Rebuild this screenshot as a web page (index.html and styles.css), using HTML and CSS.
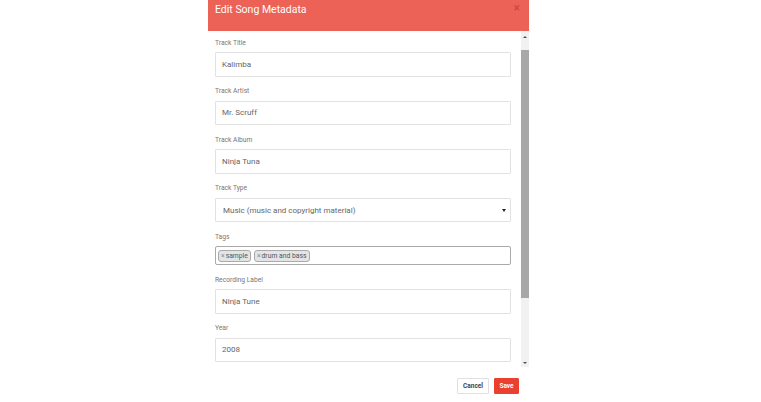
FILE: index.html
```html
<!DOCTYPE html>
<html lang="en">
<head>
    <meta charset="UTF-8">
    <meta name="viewport" content="width=device-width, initial-scale=1.0">
    <title>Edit Song Metadata</title>
    <link rel="stylesheet" href="styles.css">
</head>
<body>
    <div class="modal">
        <div class="modal-header">
            <div class="modal-title">Edit Song Metadata</div>
            <span class="close">&times;</span>
        </div>
        <div class="modal-body">
            <form class="form">
                <div class="field">
                    <label>Track Title</label>
                    <input class="input" type="text" value="Kalimba">
                </div>
                <div class="field">
                    <label>Track Artist</label>
                    <input class="input" type="text" value="Mr. Scruff">
                </div>
                <div class="field">
                    <label>Track Album</label>
                    <input class="input" type="text" value="Ninja Tuna">
                </div>
                <div class="field">
                    <label>Track Type</label>
                    <div class="select-wrap">
                        <select class="input select">
                            <option>Music (music and copyright material)</option>
                        </select>
                        <span class="caret"></span>
                    </div>
                </div>
                <div class="field field-tags">
                    <label>Tags</label>
                    <div class="tags">
                        <span class="tag"><span class="tag-x">&times;</span>sample</span>
                        <span class="tag"><span class="tag-x">&times;</span>drum and bass</span>
                    </div>
                </div>
                <div class="field">
                    <label>Recording Label</label>
                    <input class="input" type="text" value="Ninja Tune">
                </div>
                <div class="field">
                    <label>Year</label>
                    <input class="input" type="text" value="2008">
                </div>
            </form>
            <!-- fake scrollbar -->
            <div class="scrollbar">
                <span class="arrow up"></span>
                <div class="track">
                    <div class="thumb"></div>
                </div>
                <span class="arrow down"></span>
            </div>
        </div>
        <div class="modal-footer">
            <button class="btn cancel">Cancel</button>
            <button class="btn save">Save</button>
        </div>
    </div>
</body>
</html>
```

FILE: styles.css
```css
body {
    margin: 0;
    padding: 0;
    background: #fff;
    font-family: Roboto, 'Liberation Sans', Arial, sans-serif;
}
.modal {
    width: 321px;
    margin-left: 208px;
    background: #fff;
}
.modal-header {
    height: 31px;
    background: #ec6257;
    display: flex;
    justify-content: space-between;
    align-items: flex-start;
    padding: 2px 9px 0 7px;
    box-sizing: border-box;
}
.modal-title {
    color: #fff;
    font-size: 10.5px;
    line-height: 16px;
    font-weight: 400;
}
.close {
    color: #c9463c;
    font-size: 12px;
    line-height: 12px;
}
.modal-body {
    height: 336px;
    display: flex;
}
.form {
    flex: 1;
    margin: 0;
    padding: 7.5px 10px 0 7px;
    overflow: hidden;
}
.field {
    height: 48.5px;
    display: flex;
    flex-direction: column;
}
.field-tags {
    height: 43px;
}
.field label {
    font-size: 6.7px;
    line-height: 9px;
    height: 9px;
    color: #777;
    margin-bottom: 4.5px;
}
.input {
    height: 24.5px;
    width: 100%;
    box-sizing: border-box;
    border: 1px solid #e2e2e2;
    border-radius: 1px;
    padding: 0 6px;
    font-family: inherit;
    font-size: 8px;
    font-weight: 400;
    color: #666;
    background: #fff;
    outline: none;
    margin: 0;
}
.select-wrap {
    position: relative;
}
.select {
    -webkit-appearance: none;
    appearance: none;
    padding-left: 7px;
}
.caret {
    position: absolute;
    right: 5px;
    top: 11px;
    border-left: 2px solid transparent;
    border-right: 2px solid transparent;
    border-top: 3px solid #222;
}
.tags {
    height: 19px;
    box-sizing: border-box;
    border: 1px solid #aaa;
    border-radius: 2px;
    display: flex;
    align-items: center;
    gap: 3px;
    padding: 0 2px;
}
.tag {
    height: 12px;
    line-height: 10px;
    box-sizing: border-box;
    background: #e4e4e4;
    border: 1px solid #aaa;
    border-radius: 3px;
    font-size: 6.8px;
    color: #555;
    padding: 0 2px;
}
.tag-x {
    color: #888;
    margin-right: 1px;
}
.scrollbar {
    width: 8px;
    height: 336px;
    background: #f1f1f1;
    display: flex;
    flex-direction: column;
    align-items: center;
}
.arrow {
    width: 0;
    height: 0;
    border-left: 2px solid transparent;
    border-right: 2px solid transparent;
}
.arrow.up {
    margin: 5px 0 12px;
    border-bottom: 2px solid #505050;
}
.arrow.down {
    margin: 5px 0 3px;
    border-top: 2px solid #505050;
}
.track {
    flex: 1;
    width: 100%;
}
.thumb {
    height: 248px;
    width: 100%;
    background: #a8a8a8;
}
.modal-footer {
    display: flex;
    justify-content: flex-end;
    gap: 5px;
    padding: 11px 10px 0 0;
}
.btn {
    height: 16px;
    box-sizing: border-box;
    font-family: inherit;
    font-size: 6.5px;
    font-weight: 700;
    border-radius: 1px;
    cursor: pointer;
    padding: 0;
}
.cancel {
    width: 32px;
    background: #fff;
    color: #444;
    border: 1px solid #e0e0e0;
}
.save {
    width: 25px;
    background: #e9402f;
    color: #fff;
    border: 1px solid #e9402f;
}
```
